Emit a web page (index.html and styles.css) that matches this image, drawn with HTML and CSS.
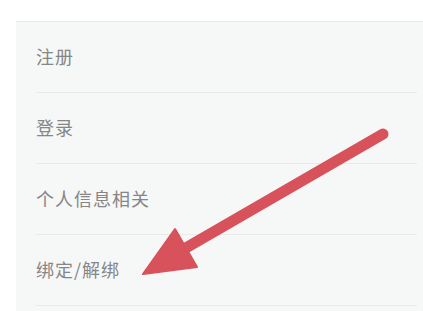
FILE: index.html
```html
<!DOCTYPE html>
<html lang="zh">
<head>
<meta charset="utf-8">
<link rel="stylesheet" href="styles.css">
</head>
<body>
<div class="page">
  <div class="topbar"></div>
  <div class="panel">
    <div class="row"><span class="label">注册</span></div>
    <div class="row"><span class="label">登录</span></div>
    <div class="row"><span class="label">个人信息相关</span></div>
    <div class="row"><span class="label">绑定/解绑</span></div>
  </div>
  <svg class="arrow" width="423" height="311" viewBox="0 0 423 311">
    <line x1="383" y1="134" x2="184" y2="249" stroke="#d8525b" stroke-width="11" stroke-linecap="round"/>
    <polygon points="143,274 175,229 197,267" fill="#d8525b" stroke="#d8525b" stroke-width="2" stroke-linejoin="round"/>
  </svg>
</div>
</body>
</html>
```
FILE: styles.css
```css
html, body {
  margin: 0;
  padding: 0;
  background: #ffffff;
}
.page {
  position: relative;
  width: 423px;
  height: 311px;
  overflow: hidden;
  font-family: "Noto Sans CJK SC", "Noto Sans", sans-serif;
}
.topbar {
  height: 21px;
}
.panel {
  margin-left: 16px;
  background: #f6f7f7;
  border-top: 1px solid #e8e9e9;
  height: 300px;
}
.row {
  height: 70px;
  margin-left: 20px;
  margin-right: 6px;
  border-bottom: 1px solid #e9eaea;
  display: flex;
  align-items: center;
}
.label {
  font-size: 18px;
  font-weight: 400;
  letter-spacing: 1px;
  color: #868686;
  position: relative;
  top: -1px;
}
.arrow {
  position: absolute;
  left: 0;
  top: 0;
}
```
